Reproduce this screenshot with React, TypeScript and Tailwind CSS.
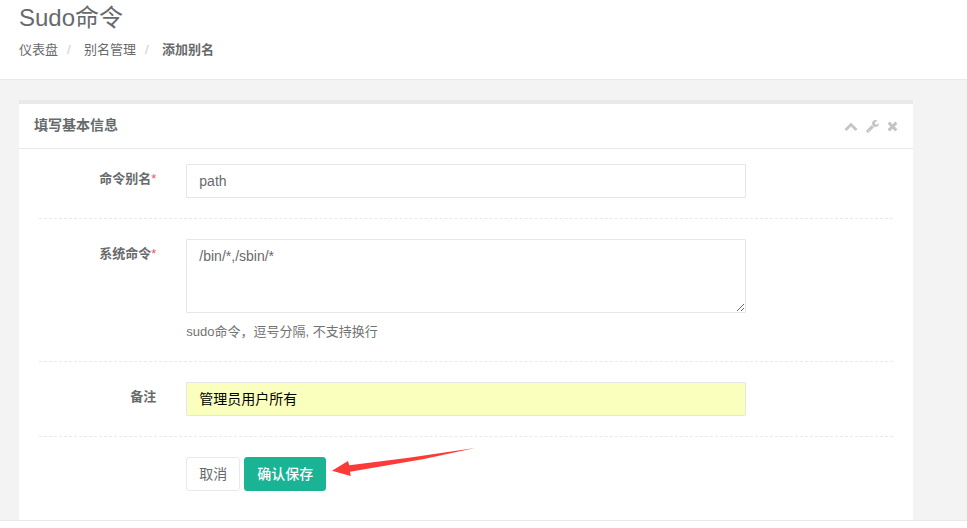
import React, { useState } from "react";

interface SudoAlias {
  name: string;
  commands: string;
  comment: string;
}

const fieldClass =
  "block w-full rounded-[1px] border border-[#e5e6e7] px-3 py-1.5 text-sm leading-5 outline-none focus:border-[#1ab394]";

const PanelTool: React.FC<{
  label: string;
  path: string;
  viewBox: string;
}> = ({ label, path, viewBox }) => (
  <button type="button" aria-label={label} className="text-[#c4c4c4]">
    <svg viewBox={viewBox} className="h-[14px] w-auto">
      <path fill="currentColor" d={path} />
    </svg>
  </button>
);

const FormRow: React.FC<{
  label?: string;
  htmlFor?: string;
  required?: boolean;
  children: React.ReactNode;
}> = ({ label, htmlFor, required, children }) => (
  <div className="-mx-[15px] grid grid-cols-12">
    <div className="col-span-2 px-[15px] pt-1.5 text-right">
      {label && (
        <label htmlFor={htmlFor} className="font-bold">
          {label}
          {required && <span className="font-normal text-[#ed5565]">*</span>}
        </label>
      )}
    </div>
    <div className="col-span-8 px-[15px]">{children}</div>
  </div>
);

const Divider = () => (
  <hr className="my-5 border-t border-dashed border-[#e7eaec]" />
);

const PageHeading = () => (
  <header className="border-b border-[#e7eaec] bg-white px-[19px] pt-1 pb-5">
    <h2 className="text-2xl leading-7">Sudo命令</h2>
    <nav className="mt-[9px]">
      <ol className="flex">
        <li>
          <a href="#dashboard">仪表盘</a>
        </li>
        <li className="flex">
          <span className="w-[26px] pl-[9px] text-[#ccc]">/</span>
          <a href="#alias">别名管理</a>
        </li>
        <li className="flex">
          <span className="w-[26px] pl-[9px] text-[#ccc]">/</span>
          <strong className="font-bold">添加别名</strong>
        </li>
      </ol>
    </nav>
  </header>
);

const AliasForm: React.FC = () => {
  const [formData, setFormData] = useState<SudoAlias>({
    name: "path",
    commands: "/bin/*,/sbin/*",
    comment: "管理员用户所有",
  });

  const handleSubmit = (e: React.FormEvent) => {
    e.preventDefault();
  };

  return (
    <form onSubmit={handleSubmit} className="px-5 pt-[15px] pb-[29px]">
      <FormRow label="命令别名" htmlFor="name" required>
        <input
          id="name"
          type="text"
          className={fieldClass}
          value={formData.name}
          onChange={(e) => setFormData({ ...formData, name: e.target.value })}
        />
      </FormRow>
      <Divider />
      <FormRow label="系统命令" htmlFor="commands" required>
        <textarea
          id="commands"
          rows={3}
          className={fieldClass}
          value={formData.commands}
          onChange={(e) =>
            setFormData({ ...formData, commands: e.target.value })
          }
        />
        <p className="mt-2.5 text-[#737373]">
          sudo命令，逗号分隔, 不支持换行
        </p>
      </FormRow>
      <Divider />
      <FormRow label="备注" htmlFor="comment">
        <input
          id="comment"
          type="text"
          className={`${fieldClass} bg-[#faffbd] text-black`}
          value={formData.comment}
          onChange={(e) =>
            setFormData({ ...formData, comment: e.target.value })
          }
        />
      </FormRow>
      <Divider />
      <FormRow>
        <div className="flex gap-1">
          <button
            type="button"
            className="rounded-[3px] border border-[#e7eaec] bg-white px-3 py-1.5 text-sm leading-5"
          >
            取消
          </button>
          <div className="relative">
            <button
              type="submit"
              className="rounded-[3px] border border-[#1ab394] bg-[#1ab394] px-3 py-1.5 text-sm leading-5 font-medium text-white"
            >
              确认保存
            </button>
            <svg
              viewBox="0 0 144 30"
              className="pointer-events-none absolute -top-[10px] left-full ml-1.5 h-[30px] w-[144px]"
            >
              <path
                fill="#fc3a38"
                d="M0 23.7L16 14L17.3 18.3L75 11L143 1L92 12L18 24.7L18.7 29Z"
              />
            </svg>
          </div>
        </div>
      </FormRow>
    </form>
  );
};

const App: React.FC = () => {
  return (
    <div className="bg-white font-['Liberation_Sans','Noto_Sans_CJK_SC',sans-serif] text-[13px] leading-[18px] text-[#676a6c]">
      <PageHeading />
      <main className="border-b border-[#e7eaec] bg-[#f3f3f4] pt-5 pr-[54px] pl-[19px]">
        <section className="border-t-4 border-[#e7eaec] bg-white">
          <div className="flex items-center justify-between border-b border-[#e7eaec] px-[15px] pt-[11px] pb-[13px]">
            <h5 className="text-sm leading-5 font-bold">填写基本信息</h5>
            <div className="flex items-center gap-2 pt-0.5">
              <PanelTool
                label="收起"
                viewBox="0 0 1792 1792"
                path="M1683 1331l-166 165q-19 19-45 19t-45-19l-531-531-531 531q-19 19-45 19t-45-19l-166-165q-19-19-19-45.5t19-45.5l742-741q19-19 45-19t45 19l742 741q19 19 19 45.5t-19 45.5z"
              />
              <PanelTool
                label="设置"
                viewBox="64 0 1664 1792"
                path="M448 1472q0-26-19-45t-45-19-45 19-19 45 19 45 45 19 45-19 19-45zm644-420l-682 682q-37 37-90 37-52 0-91-37l-106-108q-38-36-38-90 0-53 38-91l681-681q39 98 114.5 173.5t173.5 114.5zm634-435q0 39-23 106-47 134-164.5 217.5t-258.5 83.5q-185 0-316.5-131.5t-131.5-316.5 131.5-316.5 316.5-131.5q58 0 121.5 16.5t107.5 46.5q16 11 16 28t-16 28l-293 169v224l193 107q5-3 79-48.5t135.5-81 70.5-35.5q15 0 23.5 10t8.5 25z"
              />
              <PanelTool
                label="关闭"
                viewBox="192 0 1408 1792"
                path="M1490 1322q0 40-28 68l-136 136q-28 28-68 28t-68-28l-294-294-294 294q-28 28-68 28t-68-28l-136-136q-28-28-28-68t28-68l294-294-294-294q-28-28-28-68t28-68l136-136q28-28 68-28t68 28l294 294 294-294q28-28 68-28t68 28l136 136q28 28 28 68t-28 68l-294 294 294 294q28 28 28 68z"
              />
            </div>
          </div>
          <AliasForm />
        </section>
      </main>
    </div>
  );
};

export default App;
